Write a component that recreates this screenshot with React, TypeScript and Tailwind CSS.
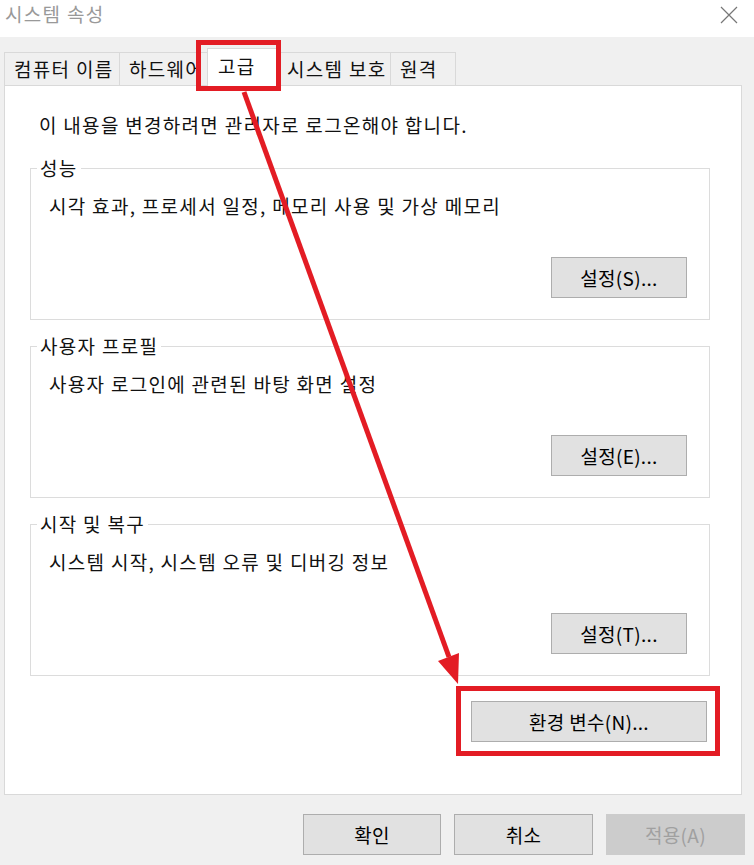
import React from "react";

function WinButton({
  label,
  disabled,
  className = "",
}: {
  label: string;
  disabled?: boolean;
  className?: string;
}) {
  return (
    <button
      className={`h-[41px] border text-[19px] leading-[26px] tracking-[0.3px] ${
        disabled
          ? "border-[#cccccc] bg-[#cccccc] text-[#a0a0a0]"
          : "border-[#adadad] bg-[#e1e1e1] text-black"
      } ${className}`}
    >
      {label}
    </button>
  );
}

function GroupBox({
  title,
  desc,
  button,
}: {
  title: string;
  desc: string;
  button: string;
}) {
  return (
    <div className="relative h-[152px] border border-[#dcdcdc] flex flex-col">
      <span className="absolute -top-[14px] left-[6px] bg-white px-[3px] leading-[26px]">
        {title}
      </span>
      <p className="pl-[18px] pt-[24px] leading-[26px]">{desc}</p>
      <WinButton label={button} className="mt-auto mb-[21px] mr-[22px] self-end w-[136px]" />
    </div>
  );
}

const tabs = [
  { label: "컴퓨터 이름", w: "w-[116px]" },
  { label: "하드웨어", w: "w-[90px]" },
  { label: "고급", w: "w-[73px]", active: true },
  { label: "시스템 보호", w: "w-[114px]" },
  { label: "원격", w: "w-[66px]" },
];

export default function App() {
  return (
    <div className="relative w-[754px] h-[865px] overflow-hidden bg-[#f0f0f0] font-['Noto_Sans_CJK_KR','Noto_Sans',sans-serif] text-[19px] tracking-[1.3px] text-[#111] flex flex-col">
      {/* title bar */}
      <div className="h-[37px] shrink-0 bg-white flex items-center justify-between pl-[5px] pr-[16px]">
        <span className="text-[#999999] leading-[26px] -mt-[9px]">시스템 속성</span>
        <svg width="18" height="18" viewBox="0 0 18 18" className="-mt-[8px]">
          <path d="M1 1 L17 17 M17 1 L1 17" stroke="#777" strokeWidth="1.2" fill="none" />
        </svg>
      </div>

      <div className="pl-[4px] pt-[11px]">
        {/* tabs */}
        <div className="flex items-end h-[37px]">
          {tabs.map((t) =>
            t.active ? (
              <div
                key={t.label}
                className={`relative z-10 ${t.w} -mx-[2px] -mb-px h-[38px] bg-white border border-b-0 border-[#d9d9d9] pl-[10px] pt-[4px] leading-[26px] whitespace-nowrap`}
              >
                {t.label}
                <div className="absolute -left-[12px] -right-[2px] -top-[9px] -bottom-[5px] border-[5px] border-[#e31c24]" />
              </div>
            ) : (
              <div
                key={t.label}
                className={`${t.w} h-[33px] -ml-px first:ml-0 border border-b-0 border-[#d9d9d9] bg-[#f0f0f0] pl-[9px] pt-[3px] leading-[26px] whitespace-nowrap overflow-hidden`}
              >
                {t.label}
              </div>
            )
          )}
        </div>

        {/* panel */}
        <div className="w-[738px] h-[710px] bg-white border border-[#d9d9d9] pl-[25px] pr-[31px] pt-[26px] flex flex-col">
          <p className="ml-[9px] leading-[26px]">이 내용을 변경하려면 관리자로 로그온해야 합니다.</p>
          <div className="mt-[30px] flex flex-col gap-[26px]">
            <GroupBox title="성능" desc="시각 효과, 프로세서 일정, 메모리 사용 및 가상 메모리" button="설정(S)..." />
            <GroupBox title="사용자 프로필" desc="사용자 로그인에 관련된 바탕 화면 설정" button="설정(E)..." />
            <GroupBox title="시작 및 복구" desc="시스템 시작, 시스템 오류 및 디버깅 정보" button="설정(T)..." />
          </div>
          <div className="relative self-end mr-[3px] mt-[25px]">
            <WinButton label="환경 변수(N)..." className="w-[236px] block" />
            <div className="absolute -left-[15px] -right-[13px] -top-[15px] -bottom-[14px] border-[5px] border-[#e31c24]" />
          </div>
        </div>
      </div>

      {/* dialog buttons */}
      <div className="mt-[19px] flex justify-end gap-[13px] pr-[9px]">
        <WinButton label="확인" className="w-[138px]" />
        <WinButton label="취소" className="w-[139px]" />
        <WinButton label="적용(A)" disabled className="w-[139px]" />
      </div>

      {/* annotation arrow */}
      <svg className="absolute inset-0 pointer-events-none" width="754" height="865">
        <line x1="244" y1="92" x2="449" y2="657" stroke="#e31c24" strokeWidth="5" />
        <polygon points="458,684 438,661 459,653" fill="#e31c24" />
      </svg>
    </div>
  );
}
